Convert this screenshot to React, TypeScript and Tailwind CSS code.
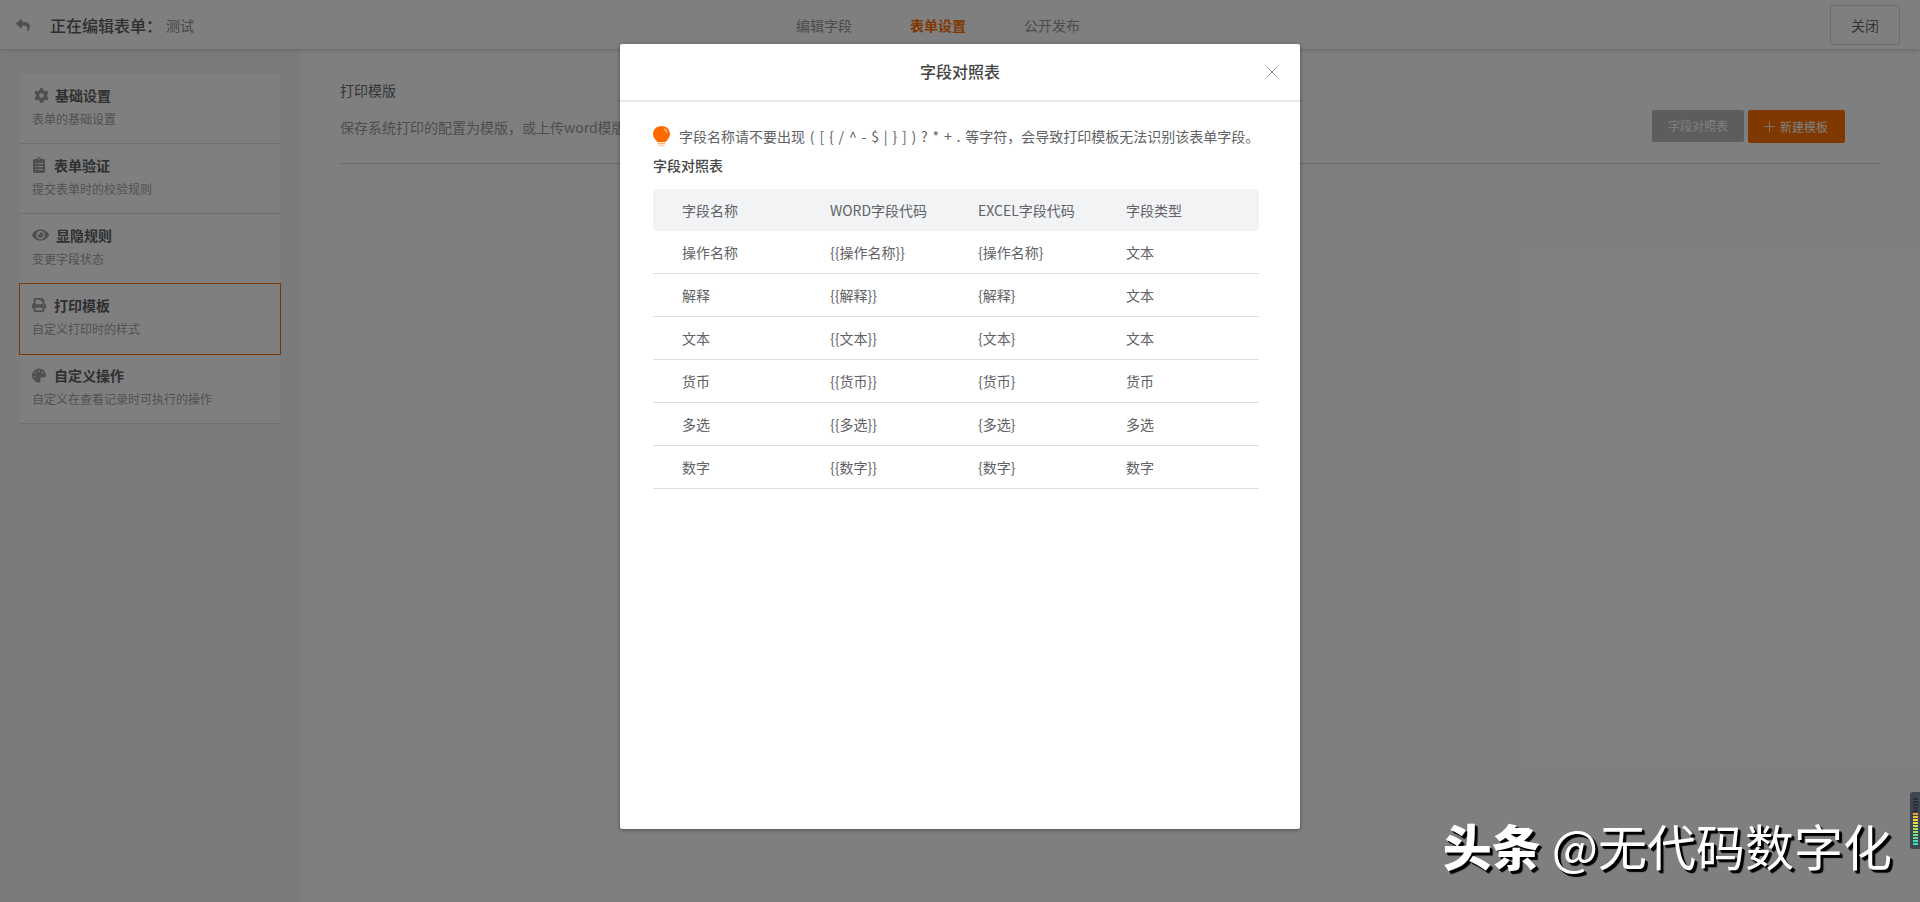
import { FaClipboardList, FaCog, FaEye, FaPalette, FaPrint, FaReply } from 'react-icons/fa'
import { X, Plus } from 'lucide-react'

const menu = [
  { title: '基础设置', desc: '表单的基础设置', icon: <FaCog className="w-[15px] h-[15px] ml-[2px]" />, gap: 'gap-[6px]' },
  { title: '表单验证', desc: '提交表单时的校验规则', icon: <FaClipboardList className="w-[14px] h-[16px]" />, gap: 'gap-[8px]' },
  { title: '显隐规则', desc: '变更字段状态', icon: <FaEye className="w-[17px] h-[16px]" />, gap: 'gap-[7px]' },
  { title: '打印模板', desc: '自定义打印时的样式', icon: <FaPrint className="w-[14px] h-[16px]" />, gap: 'gap-[8px]', active: true },
  { title: '自定义操作', desc: '自定义在查看记录时可执行的操作', icon: <FaPalette className="w-[14px] h-[15px]" />, gap: 'gap-[8px]' },
]

const fields = [
  ['操作名称', '文本'],
  ['解释', '文本'],
  ['文本', '文本'],
  ['货币', '货币'],
  ['多选', '多选'],
  ['数字', '数字'],
]

const meter = [
  'bg-[#2b3038]', 'bg-[#2b3038]', 'bg-[#2b3038]', 'bg-[#2b3038]', 'bg-[#2b3038]',
  'bg-[#f0a030]', 'bg-[#f0c040]', 'bg-[#e8d848]', 'bg-[#e0e050]', 'bg-[#c8e058]', 'bg-[#a8e068]',
  'bg-[#88e078]', 'bg-[#68e088]', 'bg-[#50e0a0]', 'bg-[#40e0b8]', 'bg-[#38e0c8]',
]

export default function App() {
  return (
    <div className="relative h-[902px] overflow-hidden bg-white font-['Noto_Sans_CJK_SC','Liberation_Sans',sans-serif] text-sm text-[#666a70]">
      <header className="relative z-10 flex h-[49px] items-center bg-white shadow-[0_1px_5px_rgba(0,0,0,0.2)]">
        <div className="flex w-[796px] items-center">
          <FaReply className="ml-[15px] h-[14px] w-[16px] text-[#9a9ea2]" />
          <span className="ml-[19px] text-base font-medium text-[#5a5e62]">正在编辑表单：</span>
          <span className="ml-[4px] text-[#8a8e92]">测试</span>
        </div>
        <nav className="flex gap-[58px]">
          <span className="text-[#92969a]">编辑字段</span>
          <span className="font-bold text-[#ff7000]">表单设置</span>
          <span className="text-[#92969a]">公开发布</span>
        </nav>
        <button className="ml-auto mr-5 h-10 w-[70px] rounded-[3px] border border-[#d8dadc] text-[#666a70]">关闭</button>
      </header>

      <div className="flex h-[853px]">
        <aside className="w-[300px] shrink-0 bg-[#f4f6f9] pl-5 pt-[25px]">
          <ul className="w-[260px]">
            {menu.map((m) => (
              <li
                key={m.title}
                className={
                  m.active
                    ? 'relative z-[1] -mx-px h-[72px] -my-px border border-[#ff7000] bg-white pl-[12px] pt-[9px]'
                    : 'h-[70px] border-b border-[#dcdfe2] bg-white pl-[12px] pt-[9px]'
                }
              >
                <div className={`flex h-[24px] items-center text-[#9a9ea2] ${m.gap}`}>
                  {m.icon}
                  <span className="font-bold text-[#5c6064]">{m.title}</span>
                </div>
                <p className="mt-[2px] text-xs leading-[20px] text-[#a0a4a8]">{m.desc}</p>
              </li>
            ))}
          </ul>
        </aside>

        <main className="flex-1 px-10 pt-[30px]">
          <div className="border-b border-[#d4d6d8] pb-5">
            <h2 className="leading-[22px] text-[#666a70]">打印模版</h2>
            <div className="mt-[9px] flex h-[33px] items-center justify-between pr-[35px]">
              <p className="text-[#989ca0]">保存系统打印的配置为模版，或上传word模版进行打印</p>
              <div className="flex gap-1">
                <button className="h-8 w-[92px] rounded-[2px] bg-[#b8babe] text-xs text-white">字段对照表</button>
                <button className="flex h-[33px] w-[97px] items-center justify-center gap-[2px] rounded-[2px] bg-[#ff7000] pr-1 text-xs text-white">
                  <Plus className="h-[17px] w-[17px]" strokeWidth={1.25} />
                  新建模板
                </button>
              </div>
            </div>
          </div>
        </main>
      </div>

      <div className="absolute inset-0 z-20 flex justify-center bg-black/50 pt-[44px]">
        <div className="h-[785px] w-[680px] rounded-[2px] bg-white shadow-[0_1px_4px_rgba(0,0,0,0.4)]">
          <div className="relative flex h-[58px] items-center justify-center border-b-2 border-[#e8e8e8] pb-[2px]">
            <h3 className="text-base font-medium text-[#444]">字段对照表</h3>
            <X className="absolute right-[18px] top-[18px] h-5 w-5 text-[#8c8c8c]" strokeWidth={1.2} />
          </div>
          <div className="px-[33px] pt-[23px]">
            <div className="flex h-[22px] items-center gap-[9px] text-[#606266] [word-spacing:1.7px]">
              <svg width="17" height="21" viewBox="0 0 17 21" className="mt-[1px] shrink-0">
                <path d="M8.5 0C3.8 0 0 3.6 0 8c0 3 1.6 4.6 3 6.2.6.7 1 1.3 1.2 1.8h8.6c.2-.5.6-1.1 1.2-1.8C15.4 12.6 17 11 17 8c0-4.4-3.8-8-8.5-8z" fill="#ff6a00" />
                <path d="M11 3c1.6.6 2.7 2 2.9 3.6" fill="none" stroke="#ffd0a8" strokeWidth="1.2" />
                <rect x="4.6" y="16.8" width="7.8" height="1.4" fill="#ffb070" />
                <rect x="5.6" y="18.8" width="5.8" height="1.4" fill="#ffc8a0" />
              </svg>
              <span>字段名称请不要出现 ( [ { '{' } / ^ - $ | { '}' } ] ) ? * + . 等字符，会导致打印模板无法识别该表单字段。</span>
            </div>
            <h4 className="mt-[7px] font-medium leading-[22px] text-[#444]">字段对照表</h4>
            <table className="mt-[13px] w-[606px] table-fixed text-left text-[#606266]">
              <thead>
                <tr className="h-[42px] bg-[#f2f3f5]">
                  <th className="w-[177px] pl-[29px] font-normal">字段名称</th>
                  <th className="w-[148px] font-normal">WORD字段代码</th>
                  <th className="w-[148px] font-normal">EXCEL字段代码</th>
                  <th className="font-normal">字段类型</th>
                </tr>
              </thead>
              <tbody>
                {fields.map(([name, type]) => (
                  <tr key={name} className="h-[43px] border-b border-[#e0e0e0] first:h-[42px]">
                    <td className="pl-[29px]">{name}</td>
                    <td>{`{{${name}}}`}</td>
                    <td>{`{${name}}`}</td>
                    <td>{type}</td>
                  </tr>
                ))}
              </tbody>
            </table>
          </div>
        </div>
      </div>

      <div className="absolute bottom-[29px] right-[28px] z-30 whitespace-nowrap text-[49px] leading-[56px] text-white [text-shadow:2px_2px_0_#000,3px_3px_1px_#000]">
        <span className="font-black">头条</span> @无代码数字化
      </div>

      <div className="absolute right-0 top-[792px] z-30 flex h-[57px] w-[10px] flex-col gap-px rounded-l-[3px] bg-[#3f4650] py-[6px] pl-[3px]">
        {meter.map((c, i) => (
          <span key={i} className={`h-[2px] w-[5px] shrink-0 ${c}`} />
        ))}
      </div>
    </div>
  )
}
